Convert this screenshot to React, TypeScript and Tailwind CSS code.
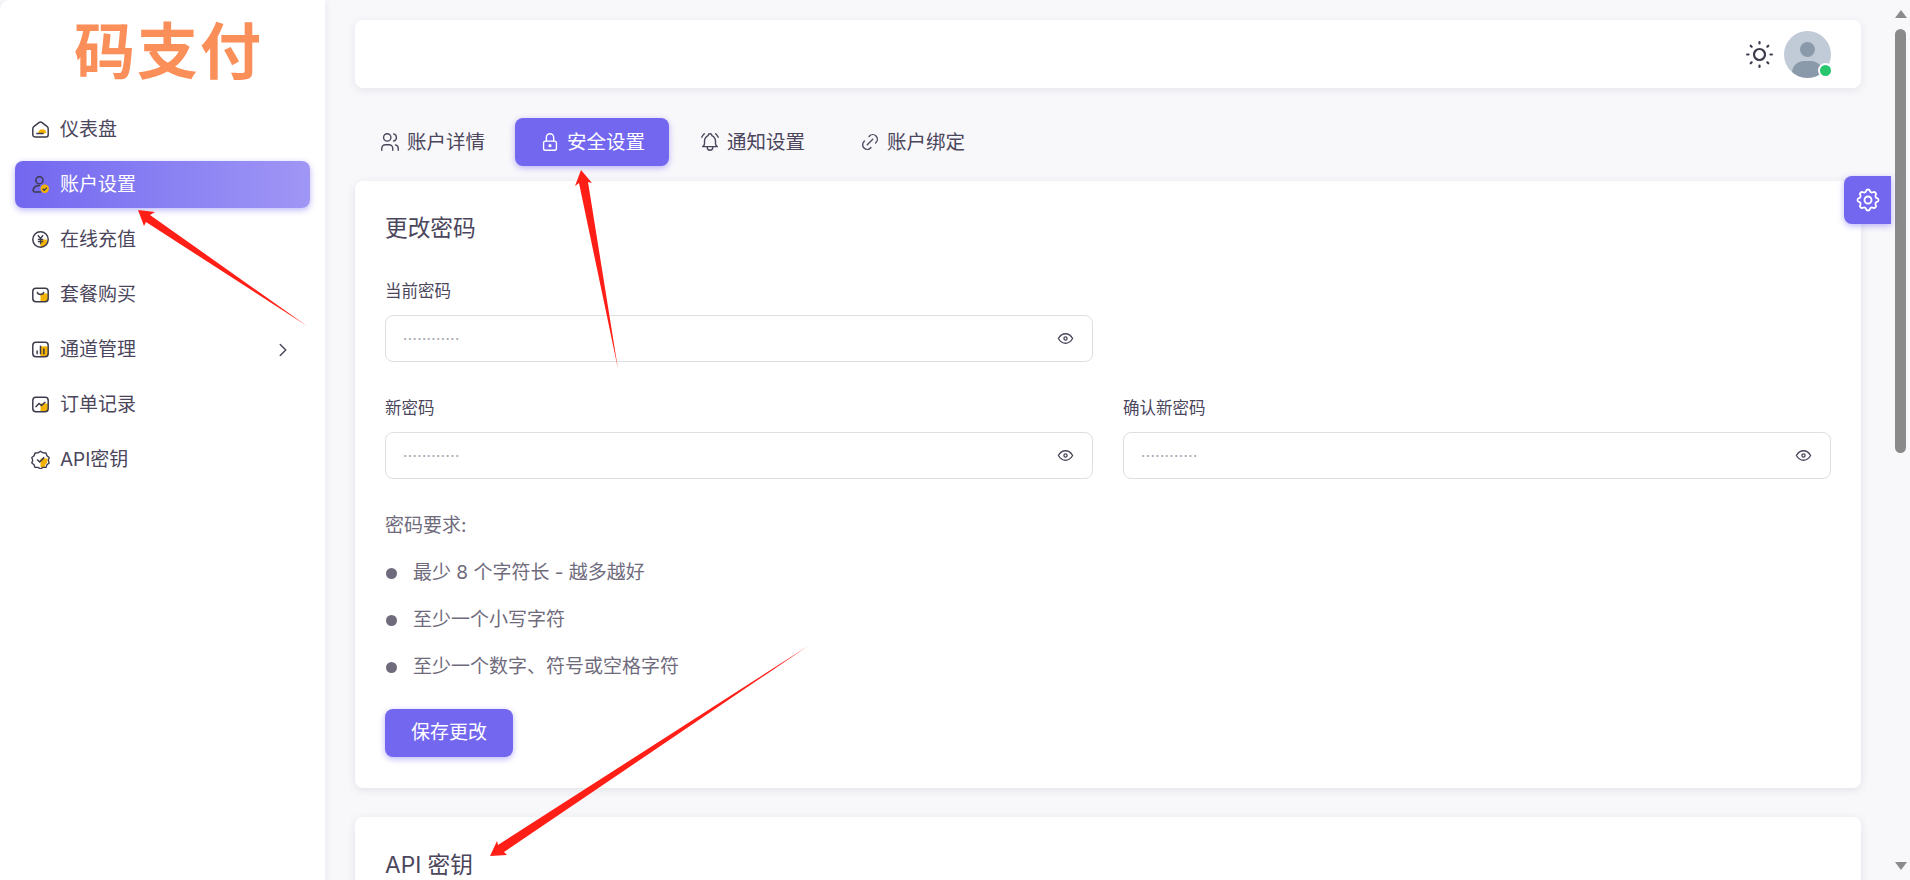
import { TbBellRinging, TbChevronRight, TbEye, TbLink, TbLock, TbSettings, TbSun, TbUsers } from 'react-icons/tb';
import type { ReactNode } from 'react';

const font = "font-['Inter','Noto_Sans_CJK_SC',sans-serif]";

const Duo = ({ children }: { children: ReactNode }) => (
  <svg width="19" height="19" viewBox="0 0 18 18" fill="none" className="shrink-0">
    {children}
  </svg>
);

const navItems: { label: string; icon: ReactNode; chevron?: boolean; active?: boolean }[] = [
  {
    label: '仪表盘',
    icon: (
      <Duo>
        <path d="M7 12.500a3.700 3.700 0 0 1 7.400 0z" fill="#f5b301" />
        <path d="M1.700 8.500c0-1 .4-1.800 1.200-2.400L7.500 2.500c.9-.7 2.100-.7 3 0l4.600 3.600c.8.600 1.200 1.400 1.200 2.400V14a2 2 0 0 1-2 2H3.700a2 2 0 0 1-2-2z" stroke="#3d3a4b" strokeWidth="1.400" />
        <path d="M5 12.800h7" stroke="#3d3a4b" strokeWidth="1.400" />
      </Duo>
    ),
  },
  {
    label: '账户设置',
    active: true,
    icon: (
      <Duo>
        <circle cx="8" cy="5" r="3.400" stroke="#3d3a4b" strokeWidth="1.400" />
        <path d="M9 16H3.500c-1 0-1.700-.8-1.500-1.800C2.600 11.600 4.800 10 8 10" stroke="#3d3a4b" strokeWidth="1.400" strokeLinecap="round" />
        <circle cx="13" cy="13" r="4" fill="#f5b301" />
        <path d="m11 13 1.500 1.500 2.500-2.500" stroke="#3d3a4b" strokeWidth="1.200" />
      </Duo>
    ),
  },
  {
    label: '在线充值',
    icon: (
      <Duo>
        <path d="M9 9h6v4l-3 3-3 .5z" fill="#f5b301" />
        <circle cx="9" cy="9" r="7.300" stroke="#3d3a4b" strokeWidth="1.400" />
        <path d="m6.500 5 2.500 3 2.500-3M9 8v5.500M6.500 9h5M6.500 11h5" stroke="#3d3a4b" strokeWidth="1.200" />
      </Duo>
    ),
  },
  {
    label: '套餐购买',
    icon: (
      <Duo>
        <rect x="9" y="8" width="7" height="7.500" fill="#f5b301" />
        <rect x="1.700" y="3" width="14.600" height="12.800" rx="3" stroke="#3d3a4b" strokeWidth="1.400" />
        <path d="M6 7c.6 2.600 5.400 2.600 6 0" stroke="#3d3a4b" strokeWidth="1.400" strokeLinecap="round" />
      </Duo>
    ),
  },
  {
    label: '通道管理',
    chevron: true,
    icon: (
      <Duo>
        <rect x="9" y="6" width="7" height="9.500" fill="#f5b301" />
        <rect x="1.700" y="2.200" width="14.600" height="13.600" rx="3" stroke="#3d3a4b" strokeWidth="1.400" />
        <path d="M5.800 13v-2.500M9 13V6M12.200 13V8.500" stroke="#3d3a4b" strokeWidth="1.400" strokeLinecap="round" />
      </Duo>
    ),
  },
  {
    label: '订单记录',
    icon: (
      <Duo>
        <rect x="9" y="8" width="7" height="7.500" fill="#f5b301" />
        <rect x="1.700" y="2.200" width="14.600" height="13.600" rx="3" stroke="#3d3a4b" strokeWidth="1.400" />
        <path d="m4.800 11 2.800-3 2.400 2 3.200-3.200" stroke="#3d3a4b" strokeWidth="1.400" strokeLinecap="round" />
      </Duo>
    ),
  },
  {
    label: 'API密钥',
    icon: (
      <Duo>
        <path d="M9 8h7l-1 4.500-1.500 1.500-.5 2H9z" fill="#f5b301" />
        <path d="m9 1.200 2.400 1.500 2.800.1.900 2.600 2.100 1.800L16.400 9.800l.8 2.500-2.100 1.700-.9 2.500-2.800 0L9 17.800l-2.400-1.300-2.800 0-.9-2.500L.800 12.300l.8-2.500-.8-2.600 2.100-1.800.9-2.600 2.800-.1z" stroke="#3d3a4b" strokeWidth="1.300" strokeLinejoin="round" />
        <path d="m5.800 9 2.400 2.400L12.500 7" stroke="#3d3a4b" strokeWidth="1.400" />
      </Duo>
    ),
  },
];

const tabs = [
  { label: '账户详情', Icon: TbUsers },
  { label: '安全设置', Icon: TbLock, active: true },
  { label: '通知设置', Icon: TbBellRinging },
  { label: '账户绑定', Icon: TbLink },
];

const PasswordField = ({ label }: { label: string }) => (
  <div className="flex-1">
    <div className="text-[16.5px] leading-[24px] text-[#4b465c] mb-[12px]">{label}</div>
    <div className="h-[47px] border border-[#dfdfe3] rounded-[8px] flex items-center justify-between pl-[17px] pr-[17px] bg-white">
      <span className="text-[15px] tracking-[0.4px] text-[#a8a6b0] leading-none">············</span>
      <TbEye size={19} strokeWidth={1.7} className="text-[#4b465c]" />
    </div>
  </div>
);

export default function App() {
  return (
    <div className={`${font} relative h-[880px] w-full flex overflow-hidden bg-[#f8f7fa]`}>
      {/* sidebar */}
      <aside className="w-[325px] shrink-0 bg-white rounded-tl-[10px] shadow-[0_2px_8px_rgba(75,70,92,0.1)] flex flex-col">
        <div className="h-[101px] flex items-center justify-center pl-[12px] pb-[6px]">
          <span className="text-[61px] font-bold leading-none tracking-[2px] text-[#fb8f5a] font-['Noto_Sans_CJK_SC',sans-serif]">码支付</span>
        </div>
        <nav className="flex flex-col gap-[8px] pt-[5px] px-[15px]">
          {navItems.map((item) => (
            <div
              key={item.label}
              className={`h-[47px] flex items-center rounded-[8px] pl-[16px] pr-[16px] gap-[10px] text-[19px] ${
                item.active
                  ? 'text-white bg-gradient-to-r from-[#7367f0] to-[#a096f5] shadow-[0_2px_6px_rgba(115,103,240,0.48)]'
                  : 'text-[#4b465c]'
              }`}
            >
              {item.icon}
              <span className="flex-1 pt-[2px]">{item.label}</span>
              {item.chevron && <TbChevronRight size={22} strokeWidth={1.6} />}
            </div>
          ))}
        </nav>
      </aside>

      {/* main */}
      <main className="flex-1 min-w-0 pl-[30px] pr-[30px] pt-[20px] flex flex-col">
        <header className="h-[68px] shrink-0 bg-white rounded-[8px] shadow-[0_2px_8px_rgba(75,70,92,0.1)] flex items-center justify-end pr-[30px] gap-[8px]">
          <TbSun size={33} strokeWidth={1.6} className="text-[#3d3a4b]" />
          <div className="relative w-[47px] h-[47px] rounded-full bg-[#c1cbd7] overflow-hidden">
            <div className="absolute left-[16px] top-[11px] w-[15px] h-[15px] rounded-full bg-[#8a9aab]" />
            <div className="absolute left-[8px] top-[30px] w-[31px] h-[24px] rounded-full bg-[#8a9aab]" />
          </div>
        </header>

        <div className="flex gap-[6px] mt-[30px] shrink-0">
          {tabs.map(({ label, Icon, active }) => (
            <div
              key={label}
              className={`h-[48px] flex items-center gap-[6px] px-[24px] rounded-[8px] text-[19.5px] ${
                active ? 'bg-[#7367f0] text-white shadow-[0_2px_6px_rgba(115,103,240,0.48)]' : 'text-[#4b465c]'
              }`}
            >
              <Icon size={22} strokeWidth={1.5} />
              <span className="pt-[2px]">{label}</span>
            </div>
          ))}
        </div>

        <section className="mt-[15px] shrink-0 bg-white rounded-[8px] shadow-[0_2px_8px_rgba(75,70,92,0.12)] px-[30px] pt-[30px] pb-[31px]">
          <h2 className="text-[22.7px] leading-[34px] text-[#4b465c]">更改密码</h2>
          <div className="mt-[34px] flex gap-[30px]">
            <PasswordField label="当前密码" />
            <div className="flex-1" />
          </div>
          <div className="mt-[34px] flex gap-[30px]">
            <PasswordField label="新密码" />
            <PasswordField label="确认新密码" />
          </div>
          <div className="mt-[33px] text-[19px] leading-[28px] text-[#6f6b7d]">密码要求:</div>
          <ul className="mt-[19px] flex flex-col gap-[19px] text-[19px] leading-[28px] text-[#6f6b7d]">
            {['最少 8 个字符长 - 越多越好', '至少一个小写字符', '至少一个数字、符号或空格字符'].map((t) => (
              <li key={t} className="flex items-center gap-[16px] pl-[1px]">
                <span className="w-[11px] h-[11px] rounded-full bg-[#6f6b7d]" />
                {t}
              </li>
            ))}
          </ul>
          <button className="mt-[28px] h-[48px] w-[128px] rounded-[8px] bg-[#7367f0] text-white text-[19px] shadow-[0_2px_6px_rgba(115,103,240,0.48)]">
            保存更改
          </button>
        </section>

        <section className="mt-[29px] flex-1 bg-white rounded-t-[8px] shadow-[0_2px_8px_rgba(75,70,92,0.12)] px-[30px] pt-[31px] min-h-[200px]">
          <h2 className="text-[22.7px] leading-[34px] text-[#4b465c]">API 密钥</h2>
        </section>
      </main>

      {/* fake scrollbar */}
      <div className="w-[19px] shrink-0 bg-[#f8f7fa] flex flex-col items-center justify-between relative pt-[10px] pb-[10px]">
        <div className="w-0 h-0 border-x-[6px] border-x-transparent border-b-[8px] border-b-[#8a8a8a]" />
        <div className="absolute left-[4px] top-[29px] w-[11px] h-[424px] rounded-full bg-[#8a8a8a]" />
        <div className="w-0 h-0 border-x-[6px] border-x-transparent border-t-[8px] border-t-[#8a8a8a]" />
      </div>

      {/* floating customizer */}
      <div className="absolute right-[19px] top-[176px] w-[47px] h-[48px] bg-[#7367f0] rounded-l-[8px] flex items-center justify-center text-white shadow-[0_2px_6px_rgba(115,103,240,0.48)]">
        <TbSettings size={28} strokeWidth={1.6} />
      </div>

      {/* status dot */}
      <div className="absolute left-[1818px] top-[63px] w-[15px] h-[15px] rounded-full bg-[#28c76f] border-[2px] border-white" />

      {/* annotation arrows */}
      <svg className="absolute inset-0 pointer-events-none" width="1910" height="880">
        <polygon points="138,210 155,212 150,215 307,326 146,222 144,226" fill="#ff1f17" />
        <polygon points="581,170 592,183 588,182 618,369 579,183 575,186" fill="#ff1f17" />
        <polygon points="490,856 497,841 498,845 808,646 504,852 507,855" fill="#ff1f17" />
      </svg>
    </div>
  );
}
